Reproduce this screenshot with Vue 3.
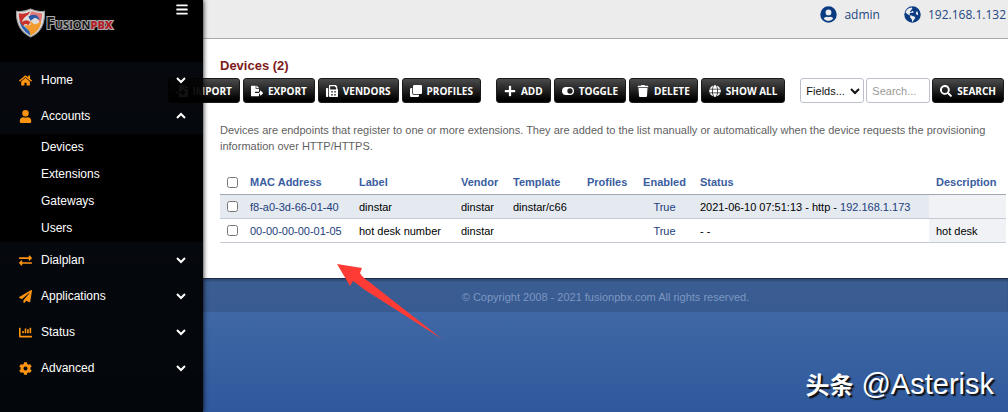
<script setup>
import { ref, reactive } from 'vue'

const icons = {
  home: [576, 'M280 148 96 300v164a16 16 0 0 0 16 16h112a16 16 0 0 0 16-16v-96a16 16 0 0 1 16-16h64a16 16 0 0 1 16 16v96a16 16 0 0 0 16 16h112a16 16 0 0 0 16-16V300L296 148a12 12 0 0 0-16 0zM572 251l-84-69V44a12 12 0 0 0-12-12h-56a12 12 0 0 0-12 12v73l-90-74a48 48 0 0 0-61 0L4 251a12 12 0 0 0-2 17l26 31a12 12 0 0 0 17 2L280 107a12 12 0 0 1 16 0l235 194a12 12 0 0 0 17-2l25-31a12 12 0 0 0-1-17z'],
  user: [448, 'M224 256a128 128 0 1 0 0-256 128 128 0 0 0 0 256zm90 32h-17a174 174 0 0 1-146 0h-17C60 288 0 348 0 422v42a48 48 0 0 0 48 48h352a48 48 0 0 0 48-48v-42c0-74-60-134-134-134z'],
  exchange: [512, 'M0 168v-16a24 24 0 0 1 24-24h360V80c0-21 26-32 41-17l80 80c9 9 9 25 0 34l-80 80c-15 15-41 4-41-17v-48H24a24 24 0 0 1-24-24zm488 152H128v-48c0-21-26-32-41-17L7 335c-9 9-9 25 0 34l80 80c15 15 41 4 41-17v-48h360a24 24 0 0 0 24-24v-16a24 24 0 0 0-24-24z'],
  plane: [512, 'M476 3 12 271c-18 10-15 35 2 43l107 44L409 106c5-5 13 2 8 8L176 407v81c0 23 28 33 42 15l64-78 125 53c14 6 31-3 33-19L512 28c3-20-19-34-36-25z'],
  chart: [512, 'M333 288h38c6 0 13-6 13-13V141c0-7-7-13-13-13h-38c-7 0-13 6-13 13v134c0 7 6 13 13 13zm96 0h38c6 0 13-6 13-13V77c0-7-7-13-13-13h-38c-7 0-13 6-13 13v198c0 7 6 13 13 13zm-288 0h38c6 0 13-6 13-13v-70c0-7-7-13-13-13h-38c-7 0-13 6-13 13v70c0 7 6 13 13 13zm96 0h38c6 0 13-6 13-13V109c0-7-7-13-13-13h-38c-7 0-13 6-13 13v166c0 7 6 13 13 13zm259 96H64V80a16 16 0 0 0-16-16H16A16 16 0 0 0 0 80v336a32 32 0 0 0 32 32h464a16 16 0 0 0 16-16v-32a16 16 0 0 0-16-16z'],
  cog: [512, 'M487 316l-42-25a193 193 0 0 0 0-71l42-24c5-3 7-9 6-14a249 249 0 0 0-55-95c-4-4-10-5-15-2l-42 24a189 189 0 0 0-62-35V25c0-6-4-11-9-12a251 251 0 0 0-110 0c-6 1-9 6-9 12v49a194 194 0 0 0-62 35L87 85c-5-3-11-2-15 2a247 247 0 0 0-55 95c-1 5 1 11 6 14l42 24a193 193 0 0 0 0 71l-42 25c-5 2-7 8-6 14a249 249 0 0 0 55 94c4 4 10 5 15 2l42-24a189 189 0 0 0 62 36v48c0 6 4 11 9 12a251 251 0 0 0 110 0c6-1 9-6 9-12v-48a194 194 0 0 0 62-36l42 24c5 3 11 2 15-2a247 247 0 0 0 55-94c1-6-1-12-6-14zM256 336a80 80 0 1 1 0-160 80 80 0 0 1 0 160z'],
  import: [512, 'M16 288a16 16 0 0 0-16 16v32a16 16 0 0 0 16 16h112v-64zM505 105 407 7a24 24 0 0 0-17-7h-6v128h128v-6a24 24 0 0 0-7-17zM352 136V0H152a24 24 0 0 0-24 24v264h128v-65c0-22 26-32 41-17l96 96c9 10 9 25 0 34l-96 97c-15 15-41 4-41-17v-64H128v136a24 24 0 0 0 24 24h336a24 24 0 0 0 24-24V160H376a24 24 0 0 1-24-24z'],
  export: [576, 'M384 121a24 24 0 0 0-7-17L280 7a24 24 0 0 0-17-7h-7v128h128zm187 215-96-97c-15-15-41-4-41 17v64h-50v64h50v65c0 22 26 32 41 17l96-96c10-10 10-25 0-34zM192 336v-32a16 16 0 0 1 16-16h176V160H248a24 24 0 0 1-24-24V0H24A24 24 0 0 0 0 24v464a24 24 0 0 0 24 24h336a24 24 0 0 0 24-24V352H208a16 16 0 0 1-16-16z'],
  fax: [512, 'M64 128H32a32 32 0 0 0-32 32v320a32 32 0 0 0 32 32h32a32 32 0 0 0 32-32V160a32 32 0 0 0-32-32zm416 33V77a32 32 0 0 0-9-22L425 9a32 32 0 0 0-22-9H160a32 32 0 0 0-32 32v448a32 32 0 0 0 32 32h320a32 32 0 0 0 32-32V192c0-13-13-26-32-31zM288 432a16 16 0 0 1-16 16h-32a16 16 0 0 1-16-16v-32a16 16 0 0 1 16-16h32a16 16 0 0 1 16 16zm0-128a16 16 0 0 1-16 16h-32a16 16 0 0 1-16-16v-32a16 16 0 0 1 16-16h32a16 16 0 0 1 16 16zm128 128a16 16 0 0 1-16 16h-32a16 16 0 0 1-16-16v-32a16 16 0 0 1 16-16h32a16 16 0 0 1 16 16zm0-128a16 16 0 0 1-16 16h-32a16 16 0 0 1-16-16v-32a16 16 0 0 1 16-16h32a16 16 0 0 1 16 16zm16-112H176V48h208v32a16 16 0 0 0 16 16h32z'],
  clone: [512, 'M464 0a48 48 0 0 1 48 48v288a48 48 0 0 1-48 48H176a48 48 0 0 1-48-48V48a48 48 0 0 1 48-48zM176 416a80 80 0 0 1-80-80V128H48a48 48 0 0 0-48 48v288a48 48 0 0 0 48 48h288a48 48 0 0 0 48-48v-48z'],
  plus: [448, 'M416 208H272V64a32 32 0 0 0-32-32h-32a32 32 0 0 0-32 32v144H32a32 32 0 0 0-32 32v32a32 32 0 0 0 32 32h144v144a32 32 0 0 0 32 32h32a32 32 0 0 0 32-32V304h144a32 32 0 0 0 32-32v-32a32 32 0 0 0-32-32z'],
  toggle: [576, 'M384 64H192a192 192 0 0 0 0 384h192a192 192 0 0 0 0-384zm0 320a128 128 0 1 1 0-256 128 128 0 0 1 0 256z'],
  trash: [448, 'M432 32H312l-9-19a24 24 0 0 0-22-13H167a24 24 0 0 0-22 13l-9 19H16A16 16 0 0 0 0 48v32a16 16 0 0 0 16 16h416a16 16 0 0 0 16-16V48a16 16 0 0 0-16-16zM53 467a48 48 0 0 0 48 45h246a48 48 0 0 0 48-45l21-339H32z'],
  globe: [496, 'M336 160C322 66 287 0 248 0s-74 66-88 160zm-184 96c0 22 1 44 3 64h186a649 649 0 0 0 0-128H155c-2 20-3 42-3 64zm325-96A249 249 0 0 0 315 17c25 34 42 86 51 143zM181 17A248 248 0 0 0 19 160h111c9-57 26-109 51-143zm306 175H373a704 704 0 0 1 0 128h114a249 249 0 0 0 0-128zM120 256c0-22 1-43 3-64H9a249 249 0 0 0 0 128h114c-2-21-3-42-3-64zm40 96c14 94 49 160 88 160s74-66 88-160zm155 143a249 249 0 0 0 162-143H366c-9 57-26 109-51 143zM19 352a249 249 0 0 0 162 143c-25-34-42-86-51-143z'],
  search: [512, 'M505 443 405 343a24 24 0 0 0-17-7h-16a208 208 0 1 0-36 36v16c0 7 3 13 7 17l100 100c9 9 24 9 34 0l28-28c9-10 9-25 0-34zM208 336a128 128 0 1 1 0-256 128 128 0 0 1 0 256z'],
  account: [496, 'M248 8a248 248 0 1 0 0 496 248 248 0 0 0 0-496zm0 96a88 88 0 1 1 0 176 88 88 0 0 1 0-176zm0 344c-59 0-111-27-146-69a112 112 0 0 1 98-59c8 0 25 8 48 8s40-8 48-8a112 112 0 0 1 98 59 191 191 0 0 1-146 69z'],
  earth: [496, 'M248 8a248 248 0 1 0 0 496 248 248 0 0 0 0-496zm82 358-17 17c-12 12-20 26-26 40-5 12-12 24-22 35l-17 14c-9 0-16-7-16-16v-36c0-9-3-17-9-23l-32-32a48 48 0 0 1-14-34v-21c0-12-7-23-17-28l-32-18c-11-6-23-14-34-22L36 196l-1-1A216 216 0 0 1 220 42l20 20v26l-16 16-20 8v22l-32 16v24h48l20-20h22l14 14v22l-10 10h-62l-24 10-20 20v36l22 22h48l28 24h36l36 34zm87-89-29-7a32 32 0 0 1-19-13l-16-24a32 32 0 0 1 0-35l17-26c2-3 5-6 9-8l12-6a198 198 0 0 1 26 126z'],
  bars: [448, 'M16 132h416a16 16 0 0 0 16-16V76a16 16 0 0 0-16-16H16A16 16 0 0 0 0 76v40a16 16 0 0 0 16 16zm0 160h416a16 16 0 0 0 16-16v-40a16 16 0 0 0-16-16H16a16 16 0 0 0-16 16v40a16 16 0 0 0 16 16zm0 160h416a16 16 0 0 0 16-16v-40a16 16 0 0 0-16-16H16a16 16 0 0 0-16 16v40a16 16 0 0 0 16 16z']
}

const menu = reactive([
  { label: 'Home', icon: 'home' },
  { label: 'Accounts', icon: 'user', open: true, items: ['Devices', 'Extensions', 'Gateways', 'Users'] },
  { label: 'Dialplan', icon: 'exchange' },
  { label: 'Applications', icon: 'plane' },
  { label: 'Status', icon: 'chart' },
  { label: 'Advanced', icon: 'cog' }
])

const transferActions = [
  { label: 'IMPORT', icon: 'import' },
  { label: 'EXPORT', icon: 'export' },
  { label: 'VENDORS', icon: 'fax' },
  { label: 'PROFILES', icon: 'clone' }
]
const listActions = [
  { label: 'ADD', icon: 'plus' },
  { label: 'TOGGLE', icon: 'toggle' },
  { label: 'DELETE', icon: 'trash' },
  { label: 'SHOW ALL', icon: 'globe' }
]

const columns = ['MAC Address', 'Label', 'Vendor', 'Template', 'Profiles', 'Enabled', 'Status', 'Description']
const devices = reactive([
  { mac: 'f8-a0-3d-66-01-40', label: 'dinstar', vendor: 'dinstar', template: 'dinstar/c66', status: '2021-06-10 07:51:13 - http - ', ip: '192.168.1.173', description: '', checked: false },
  { mac: '00-00-00-00-01-05', label: 'hot desk number', vendor: 'dinstar', template: '', status: '- -', ip: '', description: 'hot desk', checked: false }
])
const query = ref('')
const allChecked = ref(false)
function checkAll() {
  devices.forEach((d) => { d.checked = allChecked.value })
}
</script>

<template>
  <div class="page">
    <aside class="sidebar">
      <div class="brand">
        <a class="logo" href="#" aria-label="FusionPBX">
          <svg class="shield" viewBox="0 0 28 28" aria-hidden="true">
            <path d="M1 3Q8 4 14 1q6 3 13 2Q28 21 14 27 0 20 1 3z" fill="#ddd" stroke="#999" />
            <path d="M3 5q7 1 11-2l-2 3q-5 3-6 7 4-3 8 0l-2 3q-4-3-5 2Q3 13 3 5z" fill="#c8322b" />
            <path d="M15 3q5 2 10 2 0 6-2 10-2-7-7-7l-3 2q0-4 2-7z" fill="#e07a78" />
            <path d="M3 9q1 6 5 8l6 5v4Q4 20 3 9z" fill="#2d63b6" />
            <path d="M14 12l3 3q4 1 6-3l1 2q-2 8-10 12l-1-4-5-6 6 0z" fill="#f29a2e" />
            <path d="M12 8q4-3 8-1l3 4-5-2-4 3z" fill="#2858a8" />
          </svg>
          <span class="wordmark">Fusion<b>pbx</b></span>
        </a>
        <button class="toggle-menu" type="button" aria-label="Toggle menu">
          <svg class="bars" viewBox="0 0 448 512"><path :d="icons.bars[1]" /></svg>
        </button>
      </div>
      <nav>
        <template v-for="entry in menu" :key="entry.label">
          <button class="entry" type="button" :aria-expanded="!!entry.open" @click="entry.open = !entry.open">
            <svg class="entry-icon" :viewBox="`0 0 ${icons[entry.icon][0]} 512`"><path :d="icons[entry.icon][1]" /></svg>
            <span>{{ entry.label }}</span>
            <svg class="chevron" :class="{ up: entry.open }" viewBox="0 0 12 8"><path d="M2 2l4 4 4-4" /></svg>
          </button>
          <div v-if="entry.items && entry.open" class="submenu">
            <a v-for="item in entry.items" :key="item" href="#">{{ item }}</a>
          </div>
        </template>
      </nav>
    </aside>

    <div class="body">
      <header class="topbar">
        <a href="#"><svg viewBox="0 0 496 512"><path fill-rule="evenodd" :d="icons.account[1]" /></svg>admin</a>
        <a href="#"><svg viewBox="0 0 496 512"><path fill-rule="evenodd" :d="icons.earth[1]" /></svg>192.168.1.132</a>
      </header>

      <main class="content">
        <h1>Devices (2)</h1>
        <form class="actions" @submit.prevent>
          <div class="group">
            <button v-for="a in transferActions" :key="a.label" class="btn" type="button">
              <svg :viewBox="`0 0 ${icons[a.icon][0]} 512`"><path fill-rule="evenodd" :d="icons[a.icon][1]" /></svg>{{ a.label }}
            </button>
          </div>
          <div class="group">
            <button v-for="a in listActions" :key="a.label" class="btn" type="button">
              <svg :viewBox="`0 0 ${icons[a.icon][0]} 512`"><path fill-rule="evenodd" :d="icons[a.icon][1]" /></svg>{{ a.label }}
            </button>
          </div>
          <div class="group filters">
            <div class="select-wrap">
              <select class="field" aria-label="Fields"><option>Fields...</option></select>
              <svg class="caret" viewBox="0 0 12 8"><path d="M2 2l4 4 4-4" /></svg>
            </div>
            <input v-model="query" class="field search" type="text" placeholder="Search..." aria-label="Search">
            <button class="btn" type="submit">
              <svg viewBox="0 0 512 512"><path fill-rule="evenodd" :d="icons.search[1]" /></svg>SEARCH
            </button>
          </div>
        </form>

        <p class="intro">Devices are endpoints that register to one or more extensions. They are added to the list manually or automatically when the device requests the provisioning information over HTTP/HTTPS.</p>

        <table>
          <colgroup>
            <col class="c-check"><col class="c-mac"><col class="c-label"><col class="c-vendor"><col class="c-template"><col class="c-profiles"><col class="c-enabled"><col><col class="c-description">
          </colgroup>
          <thead>
            <tr>
              <th class="check"><input v-model="allChecked" type="checkbox" aria-label="Select all" @change="checkAll"></th>
              <th v-for="c in columns" :key="c" :class="{ center: c === 'Enabled' }"><a v-if="c !== 'Profiles'" href="#">{{ c }}</a><template v-else>{{ c }}</template></th>
            </tr>
          </thead>
          <tbody>
            <tr v-for="d in devices" :key="d.mac">
              <td class="check"><input v-model="d.checked" type="checkbox" :aria-label="d.mac"></td>
              <td><a href="#">{{ d.mac }}</a></td>
              <td>{{ d.label }}</td>
              <td>{{ d.vendor }}</td>
              <td>{{ d.template }}</td>
              <td></td>
              <td class="center"><a href="#">True</a></td>
              <td>{{ d.status }}<a v-if="d.ip" href="#">{{ d.ip }}</a></td>
              <td class="description">{{ d.description }}</td>
            </tr>
          </tbody>
        </table>
      </main>

      <footer>© Copyright 2008 - 2021 fusionpbx.com All rights reserved.</footer>
    </div>

    <svg class="arrow" viewBox="0 0 105 75" aria-hidden="true">
      <path d="M0 0l25 4-2 5q2 4 8 8l74 58-77-49-12-9-3 5z" fill="#ff3b35" />
    </svg>
    <div class="watermark"><b>头条</b><span>@Asterisk</span></div>
  </div>
</template>

<style>
body {
  margin: 0;
}
</style>

<style scoped>
.page {
  position: relative;
  display: grid;
  grid-template-columns: 203px minmax(0, 1fr);
  min-height: 100vh;
  overflow: hidden;
  background: linear-gradient(#5a7fb8 0, #4068a6 75%, #2f599c 100%);
  font-family: "Liberation Sans", Arial, sans-serif;
  font-size: 11px;
}
* {
  box-sizing: border-box;
}
a {
  color: #1b407c;
  text-decoration: none;
}
button {
  border: 0;
  cursor: pointer;
}

.sidebar {
  position: relative;
  z-index: 2;
  background: rgba(0, 0, 0, 0.93);
  box-shadow: 0 0 5px #000;
}
.brand {
  display: flex;
  align-items: flex-start;
  justify-content: space-between;
  height: 62px;
  padding: 0 15px;
  background: #000;
}
.logo {
  display: flex;
  align-items: center;
  padding-top: 8px;
}
.shield {
  width: 31px;
  height: 30px;
}
.wordmark {
  color: #181818;
  font: 700 16px "Open Sans", sans-serif;
  font-variant: small-caps;
  -webkit-text-stroke: 2px #aaa;
  paint-order: stroke fill;
}
.wordmark b {
  color: #b31f28;
}
.toggle-menu {
  padding: 3px 0;
  background: none;
}
.bars {
  display: block;
  width: 12px;
  height: 13px;
  fill: #fff;
}
.entry {
  display: flex;
  align-items: center;
  width: 100%;
  height: 36px;
  padding: 0 16px 0 19px;
  background: none;
  color: #fff;
  font: 12px "Liberation Sans", Arial, sans-serif;
}
.entry-icon {
  width: 13px;
  height: 13px;
  margin-right: 9px;
  fill: #ff9410;
}
.chevron {
  width: 12px;
  height: 8px;
  margin-left: auto;
}
.chevron.up {
  transform: rotate(180deg);
}
.chevron path,
.caret path {
  fill: none;
  stroke: #fff;
  stroke-width: 2;
}
.submenu {
  background: #000;
}
.submenu a {
  display: block;
  padding-left: 41px;
  color: #fff;
  font-size: 12px;
  line-height: 27px;
}

.topbar {
  display: flex;
  justify-content: flex-end;
  gap: 24px;
  height: 39px;
  padding: 0 2px 9px;
  border-bottom: 1px solid #aaa;
  background: #ececec;
  font: 12px "Open Sans", sans-serif;
}
.topbar a {
  display: flex;
  align-items: center;
  gap: 7px;
  color: #224680;
}
.topbar svg {
  width: 17px;
  height: 17px;
  fill: #0a3a82;
}

.content {
  padding: 19px 2px 35px 17px;
  background: #fff;
}
h1 {
  margin: 0;
  color: #7d1a1a;
  font-size: 13px;
  line-height: 16px;
}
.actions {
  display: flex;
  justify-content: flex-end;
  gap: 15px;
  margin: 4px 2px 0 0;
}
.group {
  display: flex;
  flex: none;
  gap: 3px;
}
.filters {
  gap: 2px;
}
.btn {
  display: flex;
  flex: none;
  align-items: center;
  gap: 5px;
  height: 25px;
  padding: 0 7px;
  border: 1px solid #1a1a1a;
  border-radius: 3px;
  background: linear-gradient(#4b4b4b, #000 90%);
  color: #fff;
  font: 700 10px "Open Sans", sans-serif;
  white-space: nowrap;
}
.btn svg {
  width: 12px;
  height: 12px;
  fill: #fff;
}
.field {
  width: 64px;
  height: 25px;
  padding: 0 5px;
  border: 1px solid #bbc0cc;
  border-radius: 3px;
  background: #fff;
  color: #111;
  font: 11px "Liberation Sans", Arial, sans-serif;
}
.search::placeholder {
  color: #999;
}
.select-wrap {
  position: relative;
}
select {
  appearance: none;
}
.caret {
  position: absolute;
  top: 9px;
  right: 3px;
  width: 12px;
  height: 8px;
  pointer-events: none;
}
.caret path {
  stroke: #111;
}
.intro {
  margin: 19px 0 0;
  color: #5f5f5f;
  line-height: 16px;
}

table {
  width: 100%;
  margin-top: 16px;
  border-collapse: separate;
  border-spacing: 0;
  table-layout: fixed;
  color: #000;
}
.c-check { width: 23px; }
.c-mac { width: 109px; }
.c-label { width: 102px; }
.c-vendor { width: 52px; }
.c-template { width: 74px; }
.c-profiles { width: 56px; }
.c-enabled { width: 57px; }
.c-description { width: 77px; }
th,
td {
  height: 24px;
  padding: 0 0 0 7px;
  border-bottom: 1px solid #c5cbd6;
  text-align: left;
  white-space: nowrap;
}
th {
  height: 25px;
  border-color: #a0a6b2;
  color: #3a5da0;
}
th a {
  color: #3a5da0;
}
.center {
  padding: 0;
  text-align: center;
}
.check input {
  display: block;
  width: 11px;
  height: 11px;
  margin: 0;
}
tbody tr:nth-child(odd) {
  background: #e5e9f0;
}
.description {
  background: #f0f2f6;
}

footer {
  height: 34px;
  border-top: 1px solid #1d2c48;
  background: rgba(0, 0, 0, 0.12);
  box-shadow: inset 0 2px 2px rgba(0, 0, 0, 0.2);
  color: #7d97c1;
  line-height: 36px;
  text-align: center;
}

.arrow {
  position: absolute;
  top: 264px;
  left: 337px;
  z-index: 3;
  width: 105px;
  height: 75px;
}
.watermark {
  position: absolute;
  right: 14px;
  bottom: 11px;
  z-index: 3;
  display: flex;
  align-items: baseline;
  gap: 8px;
  color: #fff;
  font: 24px/34px "Noto Sans CJK SC", sans-serif;
  text-shadow: 2px 2px 1px #111;
}
.watermark span {
  font-family: "Liberation Sans", Arial, sans-serif;
  font-size: 29px;
}
</style>
